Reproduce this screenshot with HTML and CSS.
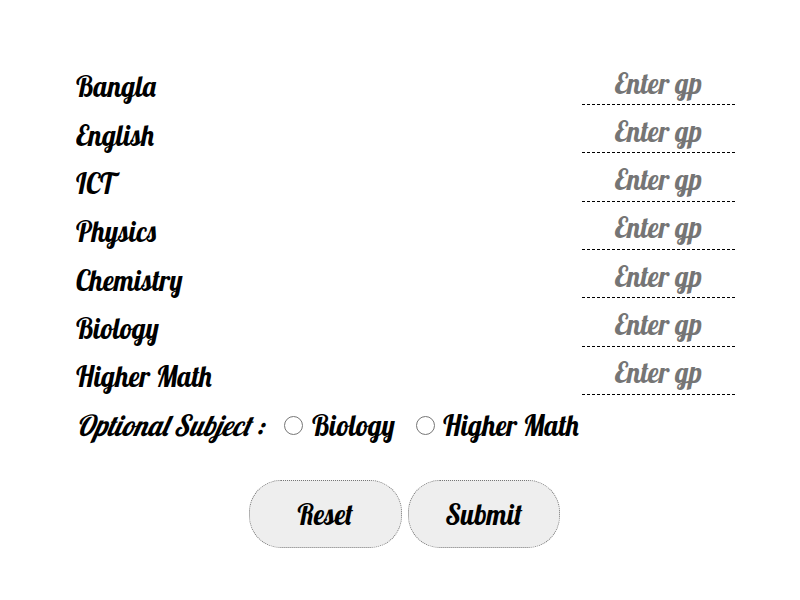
FILE: index.html
```
<!DOCTYPE html>
<html lang="en">
<head>
<meta charset="utf-8">
<title>GPA Calculator</title>
<link rel="stylesheet" href="styles.css">
</head>
<body>
<form class="calculator">
  <div class="row"><label class="cell">Bangla</label><div class="field"><input type="text" placeholder="Enter gp"></div></div>
  <div class="row"><label class="cell">English</label><div class="field"><input type="text" placeholder="Enter gp"></div></div>
  <div class="row"><label class="cell">ICT</label><div class="field"><input type="text" placeholder="Enter gp"></div></div>
  <div class="row"><label class="cell">Physics</label><div class="field"><input type="text" placeholder="Enter gp"></div></div>
  <div class="row"><label class="cell">Chemistry</label><div class="field"><input type="text" placeholder="Enter gp"></div></div>
  <div class="row"><label class="cell">Biology</label><div class="field"><input type="text" placeholder="Enter gp"></div></div>
  <div class="row"><label class="cell">Higher Math</label><div class="field"><input type="text" placeholder="Enter gp"></div></div>
  <div class="row optional">
    <div class="cell heading">Optional Subject :</div>
    <input type="radio" name="optional" class="radio">
    <label class="cell biology">Biology</label>
    <input type="radio" name="optional" class="radio second">
    <label class="cell">Higher Math</label>
  </div>
  <div class="actions">
    <button type="reset"><span>Reset</span></button>
    <button type="button"><span>Submit</span></button>
  </div>
</form>
</body>
</html>
```
FILE: styles.css
```
* {
  box-sizing: border-box;
}

body {
  margin: 0;
  background: #fff;
  color: #000;
  font: 29px/44px Lobster, "Liberation Serif", serif;
}

.calculator {
  width: 659px;
  margin: 61px 0 0 75.7px;
}

.row {
  display: flex;
  justify-content: space-between;
  height: 48.33px;
}

.cell {
  padding-top: 3.4px;
  white-space: nowrap;
  transform: scaleX(0.945);
  transform-origin: left center;
}

.field {
  width: 152.5px;
  height: 44px;
  border-bottom: 1px dashed #000;
}

.field input {
  display: block;
  width: 100%;
  height: 43px;
  padding: 0;
  border: 0;
  outline: 0;
  background: transparent;
  font: inherit;
  text-align: center;
  transform: scaleX(0.945);
}

.field input::placeholder {
  color: #757575;
}

.optional {
  justify-content: flex-start;
}

.heading {
  width: 205px;
  font-style: italic;
}

.biology {
  width: 82px;
}

.radio {
  flex: none;
  width: 19px;
  height: 19px;
  margin: 17px 9px 0 3.3px;
}

.radio.second {
  margin: 17px 8px 0 22px;
}

.actions {
  display: flex;
  gap: 6px;
  width: 311px;
  margin: 32.3px 0 0 173.7px;
}

button {
  flex: 1;
  height: 68px;
  padding: 1px 0 0;
  border: 1px dotted #767676;
  border-radius: 32px;
  background: #eee;
  color: #000;
  font: inherit;
}

button span {
  display: inline-block;
  transform: scaleX(0.945);
}
```
